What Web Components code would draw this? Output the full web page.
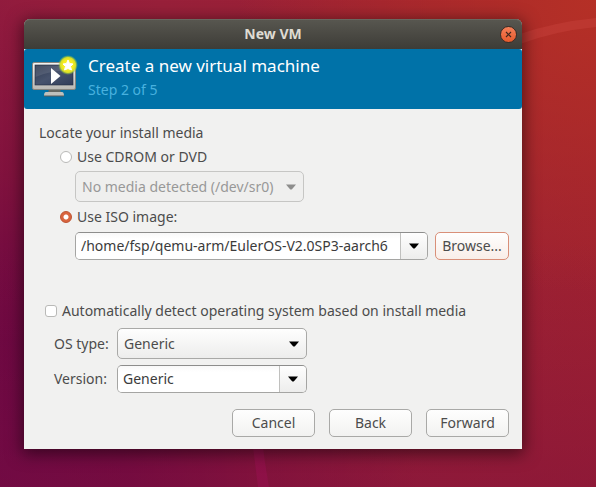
<!DOCTYPE html>
<html lang="en">
<head>
<meta charset="utf-8">
<title>New VM</title>
<style>
html { height: 100%; }
body {
  margin: 0; min-height: 100%;
  font: 14px/20px "Noto Sans", "Open Sans", sans-serif;
  color: #4c4c4c;
}
</style>
</head>
<body>
<ubuntu-desktop>
  <app-window heading="New VM">
    <wizard-banner heading="Create a new virtual machine" step="Step 2 of 5"></wizard-banner>
    <install-media></install-media>
    <os-detection></os-detection>
    <button-row>
      <push-button>Cancel</push-button>
      <push-button>Back</push-button>
      <push-button>Forward</push-button>
    </button-row>
  </app-window>
</ubuntu-desktop>

<script>
const base = `*, ::before, ::after { box-sizing: border-box; }
  button, input, select { font: inherit; color: inherit; margin: 0; }`;

const define = (name, html, setup) => customElements.define(name, class extends HTMLElement {
  constructor() {
    super();
    this.attachShadow({ mode: 'open', delegatesFocus: true }).innerHTML = html;
  }
  connectedCallback() { if (setup) setup(this, this.shadowRoot); }
});

define('ubuntu-desktop', `<style>${base}
  :host {
    display: block; position: relative; box-sizing: border-box; min-height: 100vh; overflow: hidden;
    padding: 19px 74px 38px 24px;
    background:
      radial-gradient(ellipse 70% 100% at 0% 100%, #64054a 0%, #6a0743 30%, #780d3d99 65%, #780d3d00 100%),
      radial-gradient(ellipse 60% 60% at 100% 0%, #b53026 0%, #b0292800 100%),
      linear-gradient(75deg, #8c1740 0%, #98203a 40%, #a0222e 100%);
  }
  :host::after {
    content: ""; position: absolute; inset: 0; pointer-events: none;
    background: linear-gradient(#80103c00 50%, #80103c80 100%);
  }
  .rays { position: absolute; inset: 0; width: 100%; height: 100%; }
  slot { display: block; position: relative; z-index: 1; }
</style>
<svg class="rays" viewBox="0 0 596 487" preserveAspectRatio="none" aria-hidden="true">
  <path d="M520 34Q555 22 596 18V27Q555 31 520 44Z" fill="#c8433c" opacity=".45"/>
  <path d="M252 440H262Q265 465 269 487H258Q255 462 252 440Z" fill="#a8105e" opacity=".6"/>
</svg>
<slot></slot>`);

define('app-window', `<style>${base}
  :host {
    display: block; background: #f1f1f0; border-radius: 6px 6px 0 0;
    box-shadow: 0 3px 16px 2px #00000080;
  }
  header {
    display: grid; grid-template-columns: 28px 1fr 28px; align-items: center; height: 30px;
    border-radius: 6px 6px 0 0;
    background: linear-gradient(#585750, #3d3c37);
    box-shadow: inset 0 1px #68675f;
  }
  h1 { grid-column: 2; margin: 0; text-align: center; font-size: 14px; line-height: 20px; font-weight: 700; color: #dfdbd2; }
  button {
    justify-self: center; width: 17px; height: 17px; padding: 0; border: 1px solid #3b2c25; border-radius: 50%;
    background: linear-gradient(#f58059, #e6592c); display: grid; place-items: center;
  }
</style>
<header><h1></h1><button type="button" aria-label="Close">
  <svg width="7" height="7" viewBox="0 0 7 7"><path d="M1 1L6 6M6 1L1 6" stroke="#40281f" stroke-width="1.2"/></svg>
</button></header>
<slot></slot>`, (el, root) => { root.querySelector('h1').textContent = el.getAttribute('heading'); });

define('wizard-banner', `<style>${base}
  :host {
    display: flex; gap: 8px; box-sizing: border-box; height: 60px; padding: 4px 8px; border-radius: 3px;
    background: #0072a8; color: #fff;
  }
  svg { flex: none; overflow: visible; }
  h2 { margin: 0; font-size: 17px; line-height: 25px; font-weight: 400; }
  p { margin: 0; font-size: 14px; line-height: 23px; color: #48b1df; }
</style>
<svg width="48" height="48" viewBox="0 0 48 48" aria-hidden="true">
  <defs>
    <linearGradient id="frame" x2="0" y2="1"><stop stop-color="#f4f4f2"/><stop offset="1" stop-color="#b9b8b4"/></linearGradient>
    <linearGradient id="screen" x2="1" y2="1"><stop stop-color="#303a50"/><stop offset=".5" stop-color="#47536d"/><stop offset="1" stop-color="#303c59"/></linearGradient>
    <radialGradient id="glow"><stop offset=".5" stop-color="#f8ed22"/><stop offset=".75" stop-color="#d8df28"/><stop offset="1" stop-color="#75bd47" stop-opacity="0"/></radialGradient>
  </defs>
  <path d="M17 36H28L29 40H16Z" fill="#656762"/>
  <path d="M14 39H30Q32 39 32 43H12Q12 39 14 39Z" fill="#bfc0bc"/>
  <path d="M12 43H32" stroke="#595b58"/>
  <rect x=".5" y="9.500" width="43" height="27" rx="1.500" fill="url(#frame)" stroke="#85857f"/>
  <rect x="3" y="12" width="38" height="20" fill="url(#screen)" stroke="#222c41" stroke-width=".6"/>
  <path d="M3.500 12.500H40V17Q20 17 3.500 24Z" fill="#fff" opacity=".1"/>
  <path d="M19 15L28.500 23L19 31Z" fill="#fff"/>
  <circle cx="36" cy="12" r="10" fill="url(#glow)"/>
  <path d="M36 7L37.500 10.500L41 11L38.500 13.500L39.500 17L36 15.500L32.500 17L33.500 13.500L31 11L34.500 10.500Z" fill="#fff" stroke="#fff" stroke-linejoin="round"/>
</svg>
<div><h2></h2><p></p></div>`, (el, root) => {
  root.querySelector('h2').textContent = el.getAttribute('heading');
  root.querySelector('p').textContent = el.getAttribute('step');
});

define('push-button', `<style>${base}
  :host { display: block; }
  button {
    width: 100%; height: 28px; padding: 0 5px; border: 1px solid var(--edge, #a9a9a7); border-radius: 5px;
    background: linear-gradient(#fefefe, var(--base, #f2f2f1)); white-space: nowrap;
  }
</style><button type="button"><slot></slot></button>`);

define('button-row', `<style>
  :host { display: grid; grid-template-columns: repeat(3, 83px); gap: 14px; justify-content: end; padding: 16px 13px 12px; }
</style><slot></slot>`);

const arrow = '<svg width="10" height="6" viewBox="0 0 10 6" aria-hidden="true"><path d="M0 .5H10L6 5.200Q5 6 4 5.200Z" fill="currentColor"/></svg>';

/* A drop-down with an optional label in front of it. */
define('drop-down', `<style>${base}
  :host { display: flex; align-items: center; }
  label { flex: none; width: 63px; }
  label:empty { display: none; }
  div { flex: 1; display: grid; align-items: center; min-width: 0; }
  select {
    grid-area: 1 / 1; appearance: none; width: 100%; height: 31px; padding: 0 24px 0 6px; opacity: 1;
    border: 1px solid #a9a9a7; border-radius: 5px; background: linear-gradient(#fefefe, #ededec);
  }
  select:disabled { color: #989898; background: #efefee; border-color: #c6c6c4; }
  svg { grid-area: 1 / 1; justify-self: end; margin-right: 8px; color: #000; pointer-events: none; }
  select:disabled + svg { color: #8d8d8c; }
</style><label for="s"></label><div><select id="s"><option></option></select>${arrow}</div>`, (el, root) => {
  const select = root.querySelector('select');
  root.querySelector('label').textContent = el.getAttribute('label') || '';
  root.querySelector('option').textContent = el.getAttribute('value');
  select.disabled = el.hasAttribute('disabled');
  if (el.hasAttribute('name')) select.setAttribute('aria-label', el.getAttribute('name'));
});

define('combo-entry', `<style>${base}
  :host { display: flex; align-items: center; min-width: 0; }
  label { flex: none; width: 63px; }
  label:empty { display: none; }
  div { flex: 1; display: flex; min-width: 0; height: 28px; border: 1px solid #a5a5a3; border-top-color: #8d8d8c; border-radius: 5px; overflow: hidden; }
  input { flex: 1; min-width: 0; padding: 0 5px; border: 0; color: #3b3b3b; background: linear-gradient(#f8f8f8, #fff 6px); }
  button { flex: none; width: 27px; padding: 0; border: 0; border-left: 1px solid #c0c0be; color: #000; background: linear-gradient(#fefefe, #ededec); display: grid; place-items: center; }
</style><label for="e"></label><div><input id="e" type="text"><button type="button" aria-label="Show list">${arrow}</button></div>`, (el, root) => {
  const input = root.querySelector('input');
  root.querySelector('label').textContent = el.getAttribute('label') || '';
  input.value = el.getAttribute('value');
  if (el.hasAttribute('name')) input.setAttribute('aria-label', el.getAttribute('name'));
});

const tick = `
  .choice { display: flex; align-items: center; gap: 5px; height: 30px; }
  .choice input { appearance: none; flex: none; width: 12px; height: 12px; border: 1px solid #b9b9b7; background: #fff; }
  [type=radio] { border-radius: 50%; }
  [type=checkbox] { border-radius: 3px; }
  .choice [type=radio]:checked { border-color: #bd5230; background: radial-gradient(circle, #fff 2px, #d9653f 3px); }`;

define('install-media', `<style>${base}${tick}
  :host { display: block; padding: 14px 13px 0 15px; }
  p { margin: 0; line-height: 20px; }
  .choice { padding-left: 21px; }
  p + .choice { height: 28px; }
  drop-down { width: 229px; margin-left: 36px; }
  .file { display: flex; gap: 7px; padding-left: 36px; }
  combo-entry { flex: 1; }
  push-button { width: 74px; --edge: #d98f78; --base: #f9eee8; }
</style>
<p>Locate your install media</p>
<div class="choice"><input type="radio" name="source" id="cd"><label for="cd">Use CDROM or DVD</label></div>
<drop-down name="Drive" value="No media detected (/dev/sr0)" disabled></drop-down>
<div class="choice"><input type="radio" name="source" id="iso" checked><label for="iso">Use ISO image:</label></div>
<div class="file">
  <combo-entry name="ISO image" value="/home/fsp/qemu-arm/EulerOS-V2.0SP3-aarch6"></combo-entry>
  <push-button>Browse...</push-button>
</div>`);

define('os-detection', `<style>${base}${tick}
  :host { display: block; padding: 36px 13px 0 21px; }
  .fields { display: grid; gap: 6px; width: 262px; padding: 2px 0 0 9px; }
</style>
<div class="choice"><input type="checkbox" id="auto"><label for="auto">Automatically detect operating system based on install media</label></div>
<div class="fields">
  <drop-down label="OS type:" value="Generic"></drop-down>
  <combo-entry label="Version:" value="Generic"></combo-entry>
</div>`);
</script>
</body>
</html>
